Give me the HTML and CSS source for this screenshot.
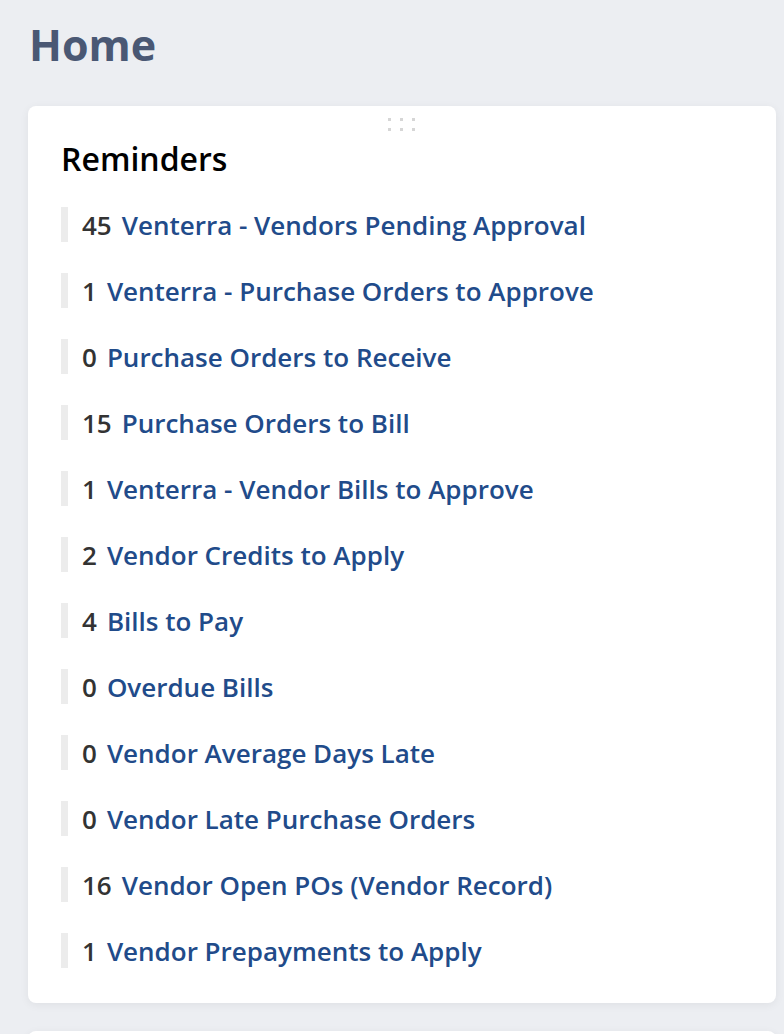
FILE: index.html
```html
<!DOCTYPE html>
<html>
<head>
<meta charset="utf-8">
<link rel="stylesheet" href="styles.css">
</head>
<body>
<div class="page">
  <h1 class="title">Home</h1>
  <section class="card">
    <div class="handle">
      <span></span><span></span><span></span><span></span><span></span><span></span>
    </div>
    <h2 class="card-title">Reminders</h2>
    <ul class="reminders">
      <li><span class="num">45</span><a href="#">Venterra - Vendors Pending Approval</a></li>
      <li><span class="num">1</span><a href="#">Venterra - Purchase Orders to Approve</a></li>
      <li><span class="num">0</span><a href="#">Purchase Orders to Receive</a></li>
      <li><span class="num">15</span><a href="#">Purchase Orders to Bill</a></li>
      <li><span class="num">1</span><a href="#">Venterra - Vendor Bills to Approve</a></li>
      <li><span class="num">2</span><a href="#">Vendor Credits to Apply</a></li>
      <li><span class="num">4</span><a href="#">Bills to Pay</a></li>
      <li><span class="num">0</span><a href="#">Overdue Bills</a></li>
      <li><span class="num">0</span><a href="#">Vendor Average Days Late</a></li>
      <li><span class="num">0</span><a href="#">Vendor Late Purchase Orders</a></li>
      <li><span class="num">16</span><a href="#">Vendor Open POs (Vendor Record)</a></li>
      <li><span class="num">1</span><a href="#">Vendor Prepayments to Apply</a></li>
    </ul>
  </section>
  <section class="card card-next"></section>
</div>
</body>
</html>
```
FILE: styles.css
```css
html, body {
  margin: 0;
  padding: 0;
  background: #eceef2;
  font-family: "Open Sans", "Noto Sans", sans-serif;
  overflow: hidden;
}
.page {
  padding: 16px 8px 0 28px;
  display: flex;
  flex-direction: column;
}
.title {
  margin: 0 0 0 1px;
  font-size: 43px;
  font-weight: 700;
  line-height: 58px;
  color: #4a5874;
}
.card {
  margin-top: 32px;
  background: #fff;
  border-radius: 8px;
  box-shadow: 0 2px 10px rgba(0, 0, 0, 0.06);
  position: relative;
  padding: 31px 33px 35px;
}
.handle {
  position: absolute;
  top: 12px;
  left: 360px;
  width: 28px;
  display: grid;
  grid-template-columns: repeat(3, 3px);
  column-gap: 9px;
  row-gap: 7px;
}
.handle span {
  width: 3px;
  height: 3px;
  background: #d6d6d6;
}
.card-title {
  margin: 0 0 26px 0;
  font-size: 32px;
  font-weight: 600;
  line-height: 44px;
  color: #000;
}
.reminders {
  list-style: none;
  margin: 0;
  padding: 0;
  display: flex;
  flex-direction: column;
  gap: 31px;
}
.reminders li {
  display: flex;
  align-items: center;
  height: 35px;
  border-left: 7px solid #ececec;
  padding-left: 14px;
  font-size: 26px;
  font-weight: 600;
}
.num {
  color: #333;
  margin-right: 10px;
}
.reminders a {
  color: #214b8a;
  text-decoration: none;
}
.card-next {
  margin-top: 28px;
  height: 100px;
  padding: 0;
}
```
